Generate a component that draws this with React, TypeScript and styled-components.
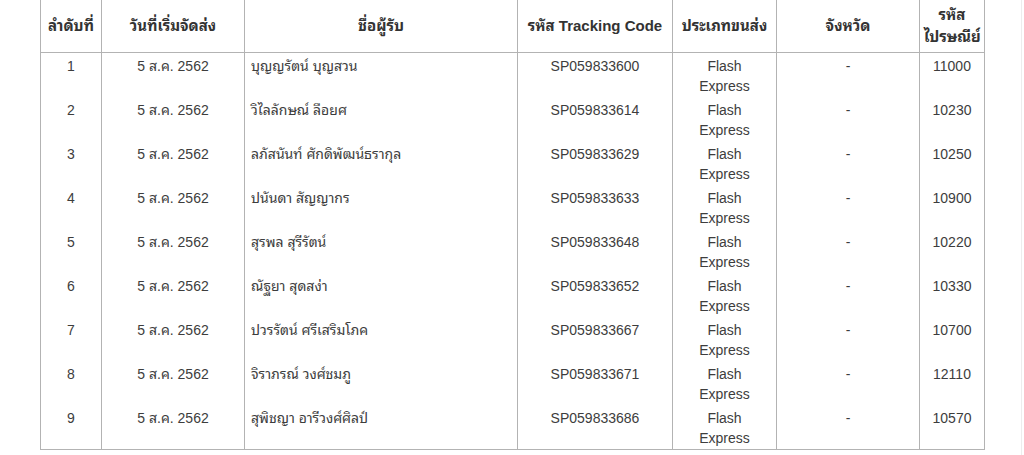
import React from "react";
import styled, { createGlobalStyle } from "styled-components";

const Global = createGlobalStyle`
  html, body { margin: 0; padding: 0; background: #ffffff; }
  body {
    font-family: "Liberation Sans", "Noto Sans Thai Looped", "Loma", "Garuda", "Noto Sans Thai", "Noto Sans", sans-serif;
    color: #3a3a3a;
  }
`;

const Page = styled.div`
  width: 1022px;
  height: 455px;
  overflow: hidden;
  padding-left: 40px;
  box-sizing: border-box;
  border-right: 1px solid #ededed;
`;

const Table = styled.table`
  border-collapse: collapse;
  table-layout: fixed;
  width: 944px;
  margin-top: -1px;
  font-size: 14px;
`;

const HeadCell = styled.th`
  border: 1px solid #b3b3b3;
  padding: 4px 4px;
  line-height: 22px;
  font-size: 15px;
  font-weight: bold;
  color: #333333;
  text-align: center;
  vertical-align: middle;
`;

const Cell = styled.td<{ $align?: "left" | "center" }>`
  border-left: 1px solid #b3b3b3;
  border-right: 1px solid #b3b3b3;
  padding: 3px 6px 1px 6px;
  line-height: 20px;
  height: 40px;
  box-sizing: content-box;
  text-align: ${(p) => p.$align ?? "center"};
  vertical-align: top;
  color: #3d3d3d;
`;

const Row = styled.tr<{ $last?: boolean }>`
  border-bottom: ${(p) => (p.$last ? "1px solid #b3b3b3" : "none")};
`;

const widths = [61, 143, 273, 155, 104, 143, 65];

const rows = [
  ["1", "บุญญรัตน์ บุญสวน", "SP059833600", "11000"],
  ["2", "วิไลลักษณ์ ลือยศ", "SP059833614", "10230"],
  ["3", "ลภัสนันท์ ศักดิพัฒน์ธรากุล", "SP059833629", "10250"],
  ["4", "ปนันดา สัญญากร", "SP059833633", "10900"],
  ["5", "สุรพล สุรีรัตน์", "SP059833648", "10220"],
  ["6", "ณัฐยา สุดสง่า", "SP059833652", "10330"],
  ["7", "ปวรรัตน์ ศรีเสริมโภค", "SP059833667", "10700"],
  ["8", "จิราภรณ์ วงศ์ชมภู", "SP059833671", "12110"],
  ["9", "สุพิชญา อารีวงศ์ศิลป์", "SP059833686", "10570"],
];

export default function App() {
  return (
    <Page>
      <Global />
      <Table>
        <colgroup>
          {widths.map((w, i) => (
            <col key={i} style={{ width: w }} />
          ))}
        </colgroup>
        <thead>
          <tr>
            <HeadCell>ลำดับที่</HeadCell>
            <HeadCell>วันที่เริ่มจัดส่ง</HeadCell>
            <HeadCell>ชื่อผู้รับ</HeadCell>
            <HeadCell>รหัส Tracking Code</HeadCell>
            <HeadCell>ประเภทขนส่ง</HeadCell>
            <HeadCell>จังหวัด</HeadCell>
            <HeadCell>
              รหัส
              <br />
              ไปรษณีย์
            </HeadCell>
          </tr>
        </thead>
        <tbody>
          {rows.map((r, i) => (
            <Row key={r[0]} $last={i === rows.length - 1}>
              <Cell>{r[0]}</Cell>
              <Cell>5 ส.ค. 2562</Cell>
              <Cell $align="left">{r[1]}</Cell>
              <Cell>{r[2]}</Cell>
              <Cell>
                Flash
                <br />
                Express
              </Cell>
              <Cell>-</Cell>
              <Cell>{r[3]}</Cell>
            </Row>
          ))}
        </tbody>
      </Table>
    </Page>
  );
}
